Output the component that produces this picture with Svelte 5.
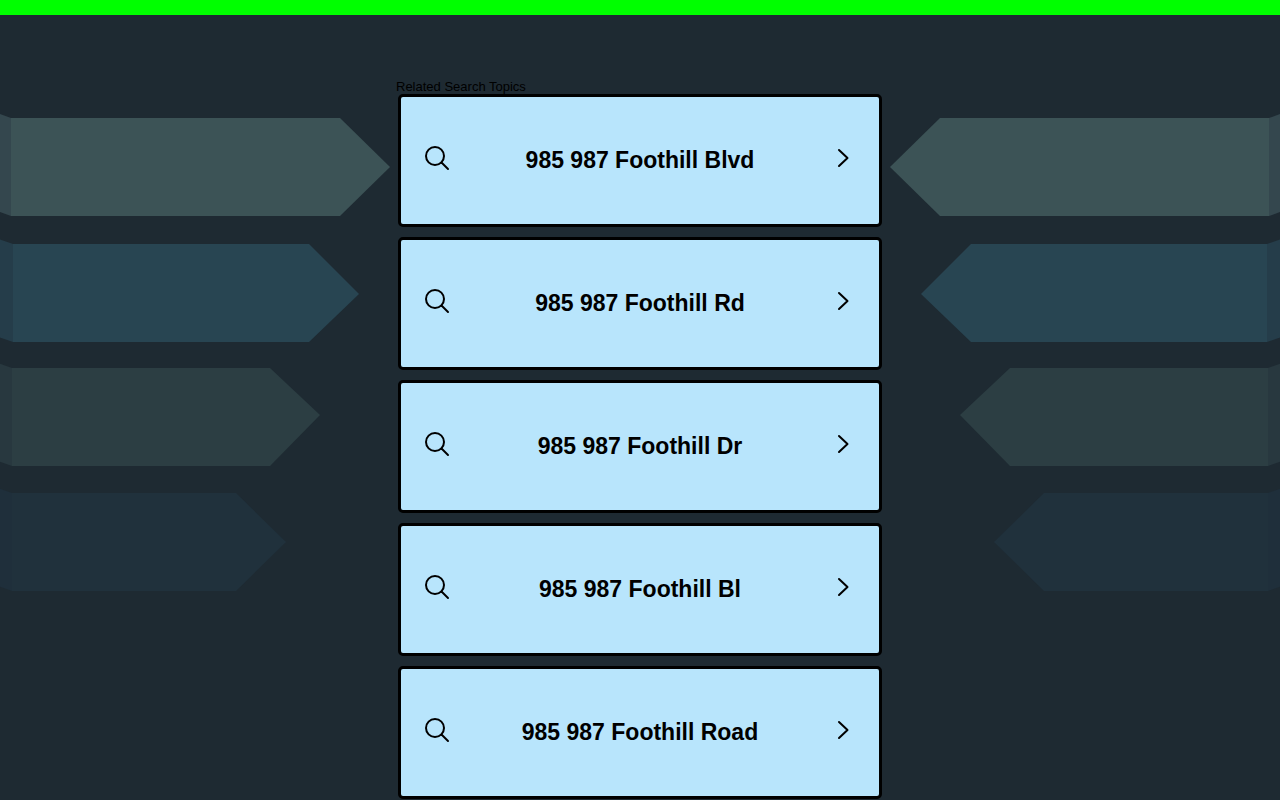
<script lang="ts">
	const topics = [
		'985 987 Foothill Blvd',
		'985 987 Foothill Rd',
		'985 987 Foothill Dr',
		'985 987 Foothill Bl',
		'985 987 Foothill Road'
	];

	// y: top of the ribbon, fold: where the side facet starts, neck/tip: arrow head
	const ribbons = [
		{ y: 118, fold: 11, neck: 340, tip: 390, mid: 49, fill: '#3c5356', side: '#34474e' },
		{ y: 244, fold: 13, neck: 309, tip: 359, mid: 50, fill: '#284552', side: '#253d4a' },
		{ y: 368, fold: 12, neck: 270, tip: 320, mid: 47, fill: '#2c3e43', side: '#28383f' },
		{ y: 493, fold: 12, neck: 236, tip: 286, mid: 49, fill: '#20313c', side: '#1f2f3b' }
	];
</script>

{#snippet arrows()}
	{#each ribbons as r}
		<path
			fill={r.side}
			d="M{r.fold} {r.y}L-240 {r.y - 90}v98L{r.fold} {r.y + 98}z"
		/>
		<path
			fill={r.fill}
			d="M{r.fold} {r.y}H{r.neck}L{r.tip} {r.y + r.mid}L{r.neck} {r.y + 98}H{r.fold}z"
		/>
	{/each}
{/snippet}

<div class="page">
	<svg class="backdrop" viewBox="0 0 1280 600" preserveAspectRatio="xMidYMin" aria-hidden="true">
		<g>{@render arrows()}</g>
		<g transform="translate(1280 0) scale(-1 1)">{@render arrows()}</g>
	</svg>

	<main>
		<h1>Related Search Topics</h1>
		<ul>
			{#each topics as topic}
				<li>
					<a href="#search">
						<svg class="search" viewBox="0 0 26 26" aria-hidden="true">
							<circle cx="11" cy="11" r="9" />
							<path d="M17.5 17.5L24 24" />
						</svg>
						<span>{topic}</span>
						<svg class="chevron" viewBox="0 0 12 20" aria-hidden="true">
							<path d="M2 2L10.5 10L2 18" />
						</svg>
					</a>
				</li>
			{/each}
		</ul>
	</main>
</div>

<style>
	:global(body) {
		margin: 0;
		background: #1e2a32;
	}

	.page {
		position: relative;
		border-top: 15px solid #00ff00;
		padding-top: 64px;
		overflow: hidden;
		font-family: 'Liberation Sans', Arial, sans-serif;
		color: #000;
	}

	.backdrop {
		position: absolute;
		top: -15px;
		left: 0;
		width: 100%;
		height: 600px;
		overflow: visible;
	}

	main {
		position: relative;
		max-width: 488px;
		margin: 0 auto;
	}

	h1 {
		margin: 0;
		font-size: 13px;
		font-weight: 400;
		line-height: 15px;
	}

	ul {
		display: flex;
		flex-direction: column;
		gap: 10px;
		margin: 0;
		padding: 0 2px;
		list-style: none;
	}

	a {
		display: flex;
		align-items: center;
		box-sizing: border-box;
		min-height: 133px;
		padding: 0 30px 2px 23px;
		border: 3px solid #000;
		border-radius: 5px;
		background: #b8e5fc;
		color: #000;
		font-size: 23px;
		font-weight: 700;
		line-height: 28px;
		text-decoration: none;
	}

	a:hover {
		background: #a5dcf8;
	}

	span {
		flex: 1;
		padding: 0 12px 0 5px;
		text-align: center;
	}

	a svg {
		flex: none;
		margin-bottom: 4px;
		fill: none;
		stroke: #000;
		stroke-width: 2;
		stroke-linecap: round;
		stroke-linejoin: round;
	}

	.search {
		width: 26px;
		height: 26px;
	}

	.chevron {
		width: 12px;
		height: 20px;
	}
</style>
